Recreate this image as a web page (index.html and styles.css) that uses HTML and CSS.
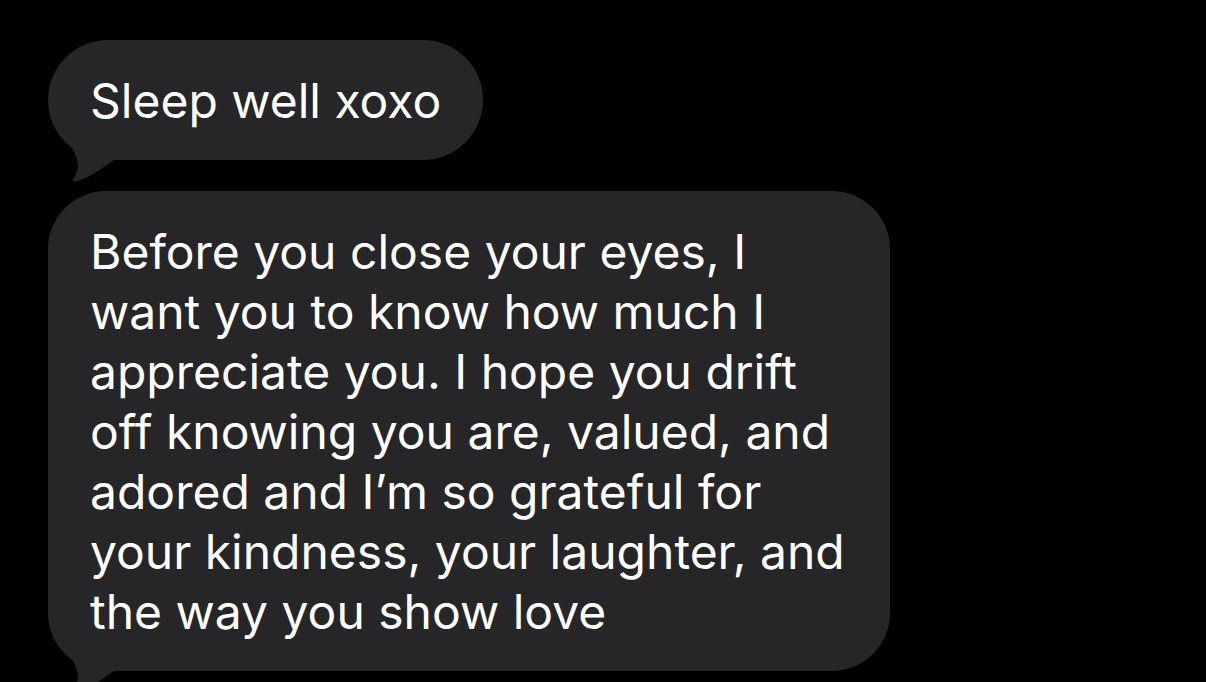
FILE: index.html
```html
<!DOCTYPE html>
<html lang="en">
<head>
<meta charset="utf-8">
<title>Messages</title>
<link rel="stylesheet" href="styles.css">
</head>
<body>
<main class="thread">
  <div class="bubble bubble--short">
    <p class="bubble__text">Sleep well xoxo</p>
    <svg class="bubble__tail" viewBox="0 0 70 60" width="70" height="60" aria-hidden="true"><path d="M18,4 C22,16 30,26 30,36 C30,42 27,46 25,49 C24,51 26,52 29,51 C40,48 52,40 66,30 L66,0 Z"/></svg>
  </div>
  <div class="bubble bubble--long">
    <p class="bubble__text">Before you close your eyes, I<br>want you to know how much I<br>appreciate you. I hope you drift<br>off knowing you are, valued, and<br>adored and I’m so grateful for<br>your kindness, your laughter, and<br>the way you show love</p>
    <svg class="bubble__tail" viewBox="0 0 70 60" width="70" height="60" aria-hidden="true"><path d="M18,4 C22,16 30,26 30,36 C30,42 27,46 25,49 C24,51 26,52 29,51 C40,48 52,40 66,30 L66,0 Z"/></svg>
  </div>
</main>
</body>
</html>
```
FILE: styles.css
```css
html, body {
  margin: 0;
  padding: 0;
  background: #000;
  overflow: hidden;
  height: 100%;
}

.thread {
  display: flex;
  flex-direction: column;
  align-items: flex-start;
  gap: 31px;
  padding: 40px 0 0 48px;
}

.bubble {
  position: relative;
  background: #262629;
  border-radius: 58px;
  padding: 31px 42px 29px 42px;
  box-sizing: border-box;
}

.bubble--short {
  border-radius: 60px;
}

.bubble--long {
  width: 842px;
}

.bubble__text {
  margin: 0;
  color: #ffffff;
  font-family: "Inter", "Liberation Sans", sans-serif;
  font-size: 48px;
  line-height: 60px;
  letter-spacing: 0;
  white-space: nowrap;
}

.bubble__tail {
  position: absolute;
  left: 0;
  bottom: -30px;
  fill: #262629;
}
```
